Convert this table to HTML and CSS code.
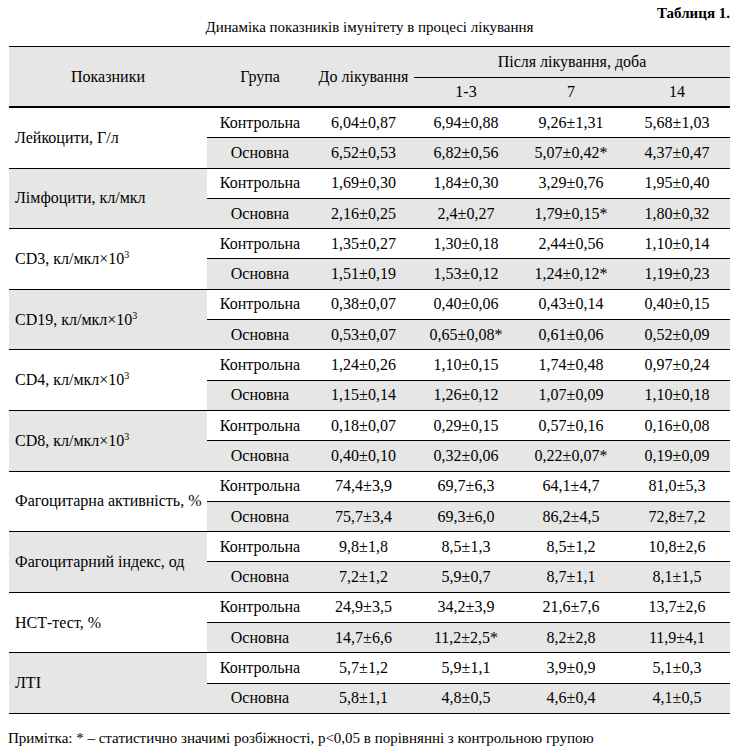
FILE: index.html
```html
<!DOCTYPE html>
<html lang="uk">
<head>
<meta charset="utf-8">
<title>Таблиця 1</title>
<link rel="stylesheet" href="styles.css">
</head>
<body>
<div class="page">
  <div class="table-no">Таблиця 1.</div>
  <div class="caption">Динаміка показників імунітету в процесі лікування</div>
  <table class="data">
    <colgroup>
      <col class="c-name">
      <col class="c-group">
      <col class="c-before">
      <col class="c-d1">
      <col class="c-d7">
      <col class="c-d14">
    </colgroup>
    <thead>
      <tr class="h1">
        <th rowspan="2">Показники</th>
        <th rowspan="2">Група</th>
        <th rowspan="2">До лікування</th>
        <th colspan="3" class="after">Після лікування, доба</th>
      </tr>
      <tr class="h2">
        <th>1-3</th>
        <th>7</th>
        <th>14</th>
      </tr>
    </thead>
    <tbody>
      <tr class="ctrl"><td rowspan="2" class="name">Лейкоцити, Г/л</td><td>Контрольна</td><td>6,04±0,87</td><td>6,94±0,88</td><td>9,26±1,31</td><td>5,68±1,03</td></tr>
      <tr class="main"><td>Основна</td><td>6,52±0,53</td><td>6,82±0,56</td><td>5,07±0,42*</td><td>4,37±0,47</td></tr>

      <tr class="ctrl"><td rowspan="2" class="name shade">Лімфоцити, кл/мкл</td><td>Контрольна</td><td>1,69±0,30</td><td>1,84±0,30</td><td>3,29±0,76</td><td>1,95±0,40</td></tr>
      <tr class="main"><td>Основна</td><td>2,16±0,25</td><td>2,4±0,27</td><td>1,79±0,15*</td><td>1,80±0,32</td></tr>

      <tr class="ctrl"><td rowspan="2" class="name">CD3, кл/мкл×10<sup>3</sup></td><td>Контрольна</td><td>1,35±0,27</td><td>1,30±0,18</td><td>2,44±0,56</td><td>1,10±0,14</td></tr>
      <tr class="main"><td>Основна</td><td>1,51±0,19</td><td>1,53±0,12</td><td>1,24±0,12*</td><td>1,19±0,23</td></tr>

      <tr class="ctrl"><td rowspan="2" class="name shade">CD19, кл/мкл×10<sup>3</sup></td><td>Контрольна</td><td>0,38±0,07</td><td>0,40±0,06</td><td>0,43±0,14</td><td>0,40±0,15</td></tr>
      <tr class="main"><td>Основна</td><td>0,53±0,07</td><td>0,65±0,08*</td><td>0,61±0,06</td><td>0,52±0,09</td></tr>

      <tr class="ctrl"><td rowspan="2" class="name">CD4, кл/мкл×10<sup>3</sup></td><td>Контрольна</td><td>1,24±0,26</td><td>1,10±0,15</td><td>1,74±0,48</td><td>0,97±0,24</td></tr>
      <tr class="main"><td>Основна</td><td>1,15±0,14</td><td>1,26±0,12</td><td>1,07±0,09</td><td>1,10±0,18</td></tr>

      <tr class="ctrl"><td rowspan="2" class="name shade">CD8, кл/мкл×10<sup>3</sup></td><td>Контрольна</td><td>0,18±0,07</td><td>0,29±0,15</td><td>0,57±0,16</td><td>0,16±0,08</td></tr>
      <tr class="main"><td>Основна</td><td>0,40±0,10</td><td>0,32±0,06</td><td>0,22±0,07*</td><td>0,19±0,09</td></tr>

      <tr class="ctrl"><td rowspan="2" class="name">Фагоцитарна активність, %</td><td>Контрольна</td><td>74,4±3,9</td><td>69,7±6,3</td><td>64,1±4,7</td><td>81,0±5,3</td></tr>
      <tr class="main"><td>Основна</td><td>75,7±3,4</td><td>69,3±6,0</td><td>86,2±4,5</td><td>72,8±7,2</td></tr>

      <tr class="ctrl"><td rowspan="2" class="name shade">Фагоцитарний індекс, од</td><td>Контрольна</td><td>9,8±1,8</td><td>8,5±1,3</td><td>8,5±1,2</td><td>10,8±2,6</td></tr>
      <tr class="main"><td>Основна</td><td>7,2±1,2</td><td>5,9±0,7</td><td>8,7±1,1</td><td>8,1±1,5</td></tr>

      <tr class="ctrl"><td rowspan="2" class="name">НСТ-тест, %</td><td>Контрольна</td><td>24,9±3,5</td><td>34,2±3,9</td><td>21,6±7,6</td><td>13,7±2,6</td></tr>
      <tr class="main"><td>Основна</td><td>14,7±6,6</td><td>11,2±2,5*</td><td>8,2±2,8</td><td>11,9±4,1</td></tr>

      <tr class="ctrl"><td rowspan="2" class="name shade">ЛТІ</td><td>Контрольна</td><td>5,7±1,2</td><td>5,9±1,1</td><td>3,9±0,9</td><td>5,1±0,3</td></tr>
      <tr class="main"><td>Основна</td><td>5,8±1,1</td><td>4,8±0,5</td><td>4,6±0,4</td><td>4,1±0,5</td></tr>
    </tbody>
  </table>
  <p class="note">Примітка: * – статистично значимі розбіжності, р&lt;0,05 в порівнянні з контрольною групою</p>
</div>
</body>
</html>
```

FILE: styles.css
```css
html, body {
  margin: 0;
  padding: 0;
  background: #ffffff;
}

body {
  font-family: "Liberation Serif", "Times New Roman", serif;
  color: #000000;
}

.page {
  width: 721px;
  padding: 0 3px 0 9px;
}

.table-no {
  text-align: right;
  font-weight: bold;
  font-size: 15px;
  line-height: 17px;
  padding-top: 5px;
}

.caption {
  text-align: center;
  font-size: 15px;
  line-height: 17px;
  margin-top: -3px;
}

.data {
  width: 721px;
  margin-top: 10px;
  border-collapse: collapse;
  table-layout: fixed;
  font-size: 16px;
}

.c-name { width: 198px; }
.c-group { width: 106px; }
.c-before { width: 101px; }
.c-d1 { width: 104px; }
.c-d7 { width: 106px; }
.c-d14 { width: 106px; }

.data th {
  font-weight: normal;
  background: #e6e6e6;
  text-align: center;
  padding: 0;
  line-height: 18px;
}

.data thead tr.h1 th {
  border-top: 1px solid #000;
  border-bottom: 2px solid #000;
  height: 30px;
}

.data thead tr.h1 th.after {
  border-bottom: 1px solid #000;
}

.data thead tr.h2 th {
  border-bottom: 2px solid #000;
  height: 28px;
}

.data td {
  text-align: center;
  padding: 0;
  line-height: 18px;
  height: 29.3px;
  border-bottom: 1px solid #000;
}

.data tr.main td {
  background: #e6e6e6;
}

.data td.name {
  text-align: left;
  padding-left: 6px;
  background: #ffffff;
}

.data td.name.shade {
  background: #e6e6e6;
}

.data sup {
  font-size: 10px;
  line-height: 0;
  vertical-align: 6px;
}

.note {
  margin: 16px 0 0 -1px;
  font-size: 15px;
  line-height: 17px;
}
```
